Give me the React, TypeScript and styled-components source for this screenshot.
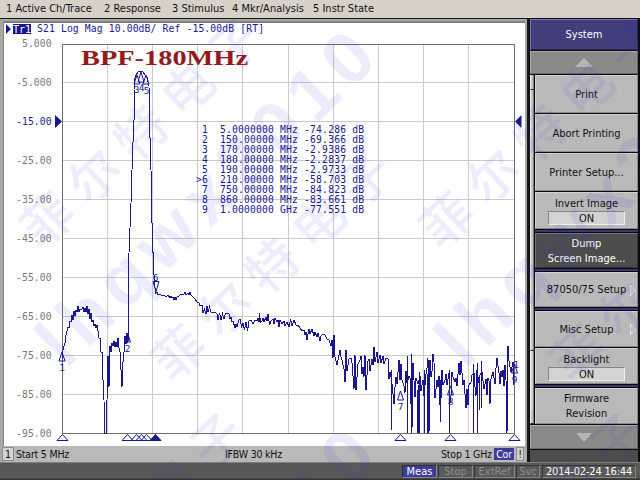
import React from "react";
import styled, { createGlobalStyle, css } from "styled-components";

const Global = createGlobalStyle`
  * { box-sizing: border-box; }
  html, body { margin: 0; padding: 0; background: #000; }
`;

const NAVY = "#1a1690";
const UI = `"DejaVu Sans Condensed", "DejaVu Sans", sans-serif`;
const MONO = `"DejaVu Sans Mono", monospace`;

const Screen = styled.div`
  position: relative;
  width: 640px;
  height: 480px;
  overflow: hidden;
  display: flex;
  flex-direction: column;
  background: #101010;
  font-family: ${UI};
  font-stretch: condensed;
  font-size: 11px;
  color: #111;
  white-space: nowrap;
`;
const MenuBar = styled.div`
  height: 18px;
  flex: none;
  display: flex;
  padding-left: 6px;
  background: #d8d1c8;
  line-height: 18px;
`;
const MenuItem = styled.span<{ $w: number }>`
  width: ${(p) => p.$w}px;
`;
const Body = styled.div`
  height: 444px;
  flex: none;
  display: flex;
`;
const Window = styled.div`
  width: 529px;
  display: flex;
  flex-direction: column;
  border-style: solid;
  border-width: 1px 2px 1px 0;
  border-color: #181818 #181818 #000 #d0d0d0;
`;
const Frame = styled.div`
  flex: 1;
  display: flex;
  flex-direction: column;
  border: solid #a8a8a4;
  border-width: 2px 2px 0 3px;
`;
const ChartArea = styled.div`
  height: 425px;
  background: #fff;
  border: solid #808084;
  border-width: 2px 0 0 1px;
`;
const StatusBar = styled.div`
  height: 16px;
  display: flex;
  align-items: center;
  background: #b9b9b9;
  font-size: 10.5px;
  letter-spacing: -0.2px;
  line-height: 14px;
`;
const Channel = styled.span`
  width: 12px;
  height: 14px;
  text-align: center;
  margin-left: -1px;
  background: #d4d4d4;
  border: 1px solid #8c8c8c;
  line-height: 12px;
`;
const StatusText = styled.span<{ $w: number }>`
  width: ${(p) => p.$w}px;
  padding-left: 2px;
`;
const Cor = styled.span`
  width: 20px;
  height: 12px;
  background: #3d3c98;
  color: #fff;
  text-align: center;
  line-height: 12px;
`;
const Alert = styled.span`
  width: 8px;
  height: 14px;
  margin-left: 2px;
  text-align: center;
  background: #d0d0d0;
  border: 1px solid #888;
  line-height: 12px;
`;

const Side = styled.div`
  width: 111px;
  display: flex;
  flex-direction: column;
  padding: 1px 2px 0 1px;
  background: #0b0b10;
`;
const bevel = css`
  border: 1px solid;
  border-color: #d0d0d0 #8b8b8b #8b8b8b #d0d0d0;
`;
const Title = styled.div`
  height: 31px;
  line-height: 30px;
  text-align: center;
  color: #fff;
  background: #413e7a;
  border: 1px solid;
  border-color: #7c7ab4 #2c2a58 #2c2a58 #7c7ab4;
`;
const Arrow = styled.div<{ $h: number }>`
  height: ${(p) => p.$h}px;
  margin-top: 1px;
  display: flex;
  align-items: center;
  justify-content: center;
  background: #8a8a89;
  border: 1px solid;
  border-color: #aaa #6a6a6a #6a6a6a #aaa;
`;
const Middle = styled.div`
  height: 350px;
  padding-top: 1px;
  display: flex;
`;
const Strip = styled.div`
  width: 4px;
  margin-right: 1px;
  display: flex;
  flex-direction: column;
  background: #c9c9c9;
`;
const StripPart = styled.div<{ $h: number; $thumb?: boolean }>`
  height: ${(p) => p.$h}px;
  border-bottom: ${(p) => (p.$thumb ? "1px solid #222" : "0")};
  border-left: 1px solid #efefef;
  border-right: 1px solid #777;
  background: ${(p) => (p.$thumb ? "#c4c4c4" : "#d2d2d2")};
`;
const Keys = styled.div`
  flex: 1;
  display: flex;
  flex-direction: column;
`;
const Key = styled.div<{ $h: number; $dark?: boolean; $gap?: number }>`
  ${bevel}
  position: relative;
  flex: none;
  height: ${(p) => p.$h}px;
  margin-bottom: ${(p) => (p.$gap ? 0 : 1)}px;
  display: flex;
  flex-direction: column;
  align-items: center;
  justify-content: center;
  line-height: 15px;
  color: ${(p) => (p.$dark ? "#fff" : "#111")};
  background: ${(p) => (p.$dark ? "#4d4d4d" : "#b9b9b9")};
  ${(p) => p.$dark && "border-color: #777 #333 #333 #777;"}
`;
const Divider = styled.div`
  height: 4px;
  flex: none;
  background: #3a386e;
  border-top: 1px solid #08080f;
  border-bottom: 1px solid #08080f;
`;
const Value = styled.div`
  width: 77px;
  height: 14px;
  line-height: 13px;
  text-align: center;
  background: #d3d3d3;
  border: 1px solid;
  border-color: #858585 #eee #eee #858585;
`;
const More = styled.svg`
  position: absolute;
  right: 1px;
  top: 11px;
`;
const Blank = styled.div`
  flex: 1;
  margin-top: 1px;
  background: #4c4c4c;
`;
const Footer = styled.div`
  height: 18px;
  display: flex;
  justify-content: flex-end;
  align-items: center;
  gap: 1px;
  padding-right: 4px;
  background: linear-gradient(#7d7d7d 0 1px, #595959 1px 16px, #333 17px);
`;
const Lamp = styled.span<{ $w: number; $on?: boolean }>`
  width: ${(p) => p.$w}px;
  height: 13px;
  line-height: 11px;
  text-align: center;
  border: 1px solid;
  border-color: #333 #858585 #858585 #333;
  background: ${(p) => (p.$on ? "#3d3c98" : "#595959")};
  color: ${(p) => (p.$on ? "#fff" : "#8e8e8e")};
`;
const Clock = styled(Lamp)`
  color: #fff;
  margin-left: 1px;
  letter-spacing: -0.2px;
`;
const Overlay = styled.svg`
  position: absolute;
  inset: 0;
  pointer-events: none;
`;

const gridX = [107.5, 152.5, 197.5, 242.5, 288.5, 333.5, 378.5, 423.5, 468.5];
const gridY = [82.5, 121.5, 160.5, 199.5, 238.5, 277.5, 316.5, 355.5, 394.5];
const levels = ["5.000", "-5.000", "-15.00", "-25.00", "-35.00", "-45.00", "-55.00", "-65.00", "-75.00", "-85.00", "-95.00"];

const trace = `62,358 63,350 65,343 66,335 67,331 68,327 69,328 70,321 71,322 72,315 73,320 74,311 75,316 76,310 77,312 78,306 79,312
80,309 82,309 83,307 84,312 85,308 86,312 87,306 88,314 89,309 90,319 91,313 92,322 93,320 94,326 95,324 96,328 97,325 98,331 99,338
100,338 101,352 102,352 103,380 104,400 104.5,433 106.5,433 107,400 108,356 109,387 110,346 111,352 112,343 113,346 114,341 115,347 116,342 117,347
118,338 119,348 120,352 121,370 122,387 123,362 124,352 125,336 126,344 127,333 128,343 128.5,300 129,253 131,203 132.5,153 134,120 134,90
134.5,79 136,75 138,72 140,71 143,72 145,75 147,77 149,86 149.5,121 151,170 152,223 153.5,267 154.5,283 155.5,293 157,292 158,295 160,294 162,296 164,295 166,297 168,295 170,298
171,296 172,298 173,297 174,300 175,297 176,300 177,297 179,296 180,295 182,294 184,294 185,292 186,295 188,293 189,295 190,292 191,295
193,297 195,299 197,302 199,303 200,306 202,305 203,313 204.5,309 206,314 207,306 208,312 209.5,307 211,312 213,312
215,312 217,314 218,320 219.5,313 221,320 222.500,314 224,319 225.5,313 227,313 229,314 230,319 231,317 232,322 233,321 235,328
236,324 237,327 238.5,321 240,319 241.5,327 243,323 244.5,330 246,322 247.5,331 249,321 251,320
253,324 255,320 257,321 258,318 259,322 259.5,313 260.5,322 262,321 263,318 264,322 266,317 267,321 268,314 269.5,325 271,321 273,319
274,324 275,318 277,322 278,320 279,327 280,320 282,324 284,321 285,326 287,322 289,327 290.5,319 292,326 294,320 296,325 298,325
300,328 302,331 304,330 305,335 306,332 307,340 309,329 310,334 312,329 314,336 315,332 317,337 318,333 320,341 321,336 323,334 325,335
327,339 329,340 331,346 332,340 333,358 334,335 335,357 337,365 338,360 340,350 341,357 342,360 344,369 345,382 346,350 347,371 349,359
351,358 352,363 354,389 355,355 356,390 358,364 360,360 361,356 362,374 363,367 364,377 365,355 366,390 368,361 369,359 370,371 372,359
373,365 374,347 375,362 377,352 378,363 380,355 381,363 383,356 384,364 386,358 388,359 389,379 390,372 391,377 392,384 394,404
395,387 396,377 397,384 399,360 400,380 401,364 402,380 404,386 405,393 406,371 407,383 409,376 410,378 412,430 412.5,380 413,363 415,397
416,378 418,384 420,376 421,391 423,380 424,396 426,374 427,368 428,358 429,433 430,360 431,377 432,371 433,354 434,362 435,398
437,380 438,387 439,376 440,405 441,399 442,370 443,385 445,380 446,374 447,385 449,373 450,403 451,396 452,372 453,377 455,382
456,378 457,386 459,363 460,375 461,361 463,385 464,380 466,408 467,389 468,405 469,385 471,382 472,375 474,373 475,387 476,396
477,370 479,383 480,375 482,372 484,389 486,379 487,395 488,378 489,381 490,404 491,379 493,372 495,384 496,368 497,358 499,373 500,384
501,371 502,377 503,370 504,386 505,365 506,380 507,433 508,346 509,361 511,372 512,367 513,362 514,385`;

// Deep noise spikes in the upper stopband, as [x, top, bottom].
const spikes: number[][] = [[407, 356, 433], [411, 354, 433], [417, 390, 433], [418, 385, 433], [419, 372, 433], [424, 370, 433], [427, 374, 433], [440, 380, 422],
  [473, 364, 433], [477, 363, 433], [481, 361, 408], [479, 380, 410], [449, 370, 433], [391, 370, 430]];

const marks: [string, number, number][] = [["1", 62, 361], ["2", 127.5, 342], ["7", 400.5, 400], ["8", 450.5, 395], ["9", 514.5, 373]];
const triangles = [62.5, 127.5, 136.5, 141.5, 146.5, 155.5, 400.5, 450.5, 514.5];
const readings = [
  " 1  5.0000000 MHz -74.286 dB", " 2  150.00000 MHz -69.366 dB", " 3  170.00000 MHz -2.9386 dB",
  " 4  180.00000 MHz -2.2837 dB", " 5  190.00000 MHz -2.9733 dB", ">6  210.00000 MHz -58.703 dB",
  " 7  750.00000 MHz -84.823 dB", " 8  860.00000 MHz -83.661 dB", " 9  1.0000000 GHz -77.551 dB",
];

function Plot() {
  return (
    <svg width="521" height="423" viewBox="4 23 521 423" fontFamily={MONO} style={{ display: "block" }}>
      <path d="M6 24v10l5-5z" fill={NAVY} />
      <rect x="13" y="24" width="18" height="10" fill={NAVY} />
      <text x="13" y="32.5" fontSize="10" fill="#fff" textLength="18">Tr1</text>
      <text x="37" y="32" fontSize="9.7" fill={NAVY} textLength="227">S21 Log Mag 10.00dB/ Ref -15.00dB [RT]</text>
      <g stroke="#cbcbcb" fill="none" shapeRendering="crispEdges">
        {gridX.map((x) => <path key={x} d={`M${x} 44V433`} />)}
        {gridY.map((y) => <path key={y} d={`M62 ${y}H514`} />)}
        <rect x="62.5" y="44.5" width="452" height="389" stroke="#6e6e6e" />
      </g>
      {levels.map((t, i) => (
        <text key={t} x="51.5" y={47 + i * 38.95} fontSize="9.7" textAnchor="end" textLength={t.length * 5.9} fill={i === 2 ? NAVY : "#77777c"}>{t}</text>
      ))}
      <path d="M55 115v13l7-6.500zM521.500 115v13l-6.500-6.500z" fill={NAVY} />
      <text x="81" y="65" fontFamily='"Liberation Serif", serif' fontWeight="bold" fontSize="21" fill="#951a20" textLength="167" lengthAdjust="spacingAndGlyphs">BPF-180MHz</text>
      <path d="M133.500 57.800h14" stroke="none" />
      <g fill="none" stroke={NAVY} strokeWidth="1" shapeRendering="crispEdges">
        <polyline points={trace} />
        {spikes.map(([x, a, b]) => <path key={x + "-" + a} d={`M${x}.5 ${a}V${b}`} />)}
      </g>
      <g fill="none" stroke={NAVY} strokeWidth="1">
        <path d="M134 84l3-9 3 9zM138 82l3-10 3 10zM143 84l3-9 3 9zM153 281.500h6l-3 10z" />
        {marks.map(([n, x, y]) => <path key={n} d={`M${x - 3} ${y}h6l-3-9z`} />)}
      </g>
      <g fill={NAVY} fontSize="9.500" textAnchor="middle">
        {marks.map(([n, x, y]) => <text key={n} x={x} y={y + 9.5}>{n}</text>)}
        <text x="136.500" y="93">3</text><text x="141.500" y="91">4</text><text x="146.500" y="94">5</text>
        <text x="155.500" y="280.500">6</text>
        <text x="516" y="368">1</text>
      </g>
      {triangles.map((x) => (
        <path key={x} d={`M${x - 5.5} 440.500h11l-5.500-6z`} fill={x === 155.5 ? NAVY : "none"} stroke={NAVY} />
      ))}
      <g fontSize="9.7" fill={NAVY}>
        {readings.map((r, i) => (
          <text key={r} x="196" y={133 + i * 10} style={{ whiteSpace: "pre" }} textLength="168">{r}</text>
        ))}
      </g>
    </svg>
  );
}

const cn: number[][] = [[47, 220], [178, 353], [446, 220], [577, 353], [29, 615], [429, 615]];
const latin: number[][] = [[66, 370], [465, 370], [66, 768]];

function Watermark() {
  return (
    <Overlay width="640" height="480" fill="#3a30e0" fillOpacity="0.09">
      {cn.map(([x, y]) => (
        <g key={`${x},${y}`} transform={`translate(${x} ${y}) rotate(-43)`}>
          <text x="-25" y="19" fontFamily='"Noto Sans CJK SC", sans-serif' fontWeight="500" fontSize="51" letterSpacing="13">菲尔特电子</text>
        </g>
      ))}
      {latin.map(([x, y]) => (
        <g key={`${x},${y}`} transform={`translate(${x} ${y}) rotate(-44.500)`}>
          <text x="0" y="0" fontFamily='"Liberation Sans", sans-serif' fontWeight="bold" fontSize="73" letterSpacing="8.8">lhqwx2010</text>
        </g>
      ))}
    </Overlay>
  );
}

const Right = () => <More width="6" height="13"><path d="M.5 1v11l5-5.500z" fill="#c8c8c8" stroke="#e2e2e2" /></More>;

export default function App() {
  return (
    <Screen>
      <Global />
      <MenuBar>
        <MenuItem $w={98}>1 Active Ch/Trace</MenuItem>
        <MenuItem $w={68}>2 Response</MenuItem>
        <MenuItem $w={60}>3 Stimulus</MenuItem>
        <MenuItem $w={81}>4 Mkr/Analysis</MenuItem>
        <MenuItem $w={70}>5 Instr State</MenuItem>
      </MenuBar>
      <Body>
        <Window>
          <Frame>
            <ChartArea><Plot /></ChartArea>
            <StatusBar>
              <Channel>1</Channel>
              <StatusText $w={209}>Start 5 MHz</StatusText>
              <StatusText $w={216}>IFBW 30 kHz</StatusText>
              <StatusText $w={55}>Stop 1 GHz</StatusText>
              <Cor>Cor</Cor>
              <Alert>!</Alert>
            </StatusBar>
          </Frame>
        </Window>
        <Side>
          <Title>System</Title>
          <Arrow $h={23}><svg width="18" height="9"><path d="M1 8.500h16l-8-8z" fill="#b5b5b5" stroke="#c4c4c4" strokeWidth=".6" /></svg></Arrow>
          <Middle>
            <Strip>
              <StripPart $h={15} $thumb />
              <StripPart $h={261} $thumb />
              <StripPart $h={59} />
              <StripPart $h={14} $thumb />
            </Strip>
            <Keys>
              <Key $h={38}>Print</Key>
              <Key $h={38}>Abort Printing</Key>
              <Key $h={38}>Printer Setup...</Key>
              <Key $h={37} $gap={1}>Invert Image<Value>ON</Value></Key>
              <Divider />
              <Key $h={35} $dark $gap={1}><span>Dump</span><span>Screen Image...</span></Key>
              <Divider />
              <Key $h={35} $gap={1}>87050/75 Setup<Right /></Key>
              <Divider />
              <Key $h={36}>Misc Setup<Right /></Key>
              <Key $h={36} $gap={1}>Backlight<Value>ON</Value></Key>
              <Divider />
              <Key $h={36} $gap={1}><span>Firmware</span><span>Revision</span></Key>
            </Keys>
          </Middle>
          <Arrow $h={24}><svg width="16" height="9"><path d="M1 .5h14l-7 8z" fill="#b5b5b5" stroke="#c4c4c4" strokeWidth=".6" /></svg></Arrow>
          <Blank />
        </Side>
      </Body>
      <Footer>
        <Lamp $w={35} $on>Meas</Lamp>
        <Lamp $w={35}>Stop</Lamp>
        <Lamp $w={41}>ExtRef</Lamp>
        <Lamp $w={24}>Svc</Lamp>
        <Clock $w={94}>2014-02-24 16:44</Clock>
      </Footer>
      <Watermark />
    </Screen>
  );
}
